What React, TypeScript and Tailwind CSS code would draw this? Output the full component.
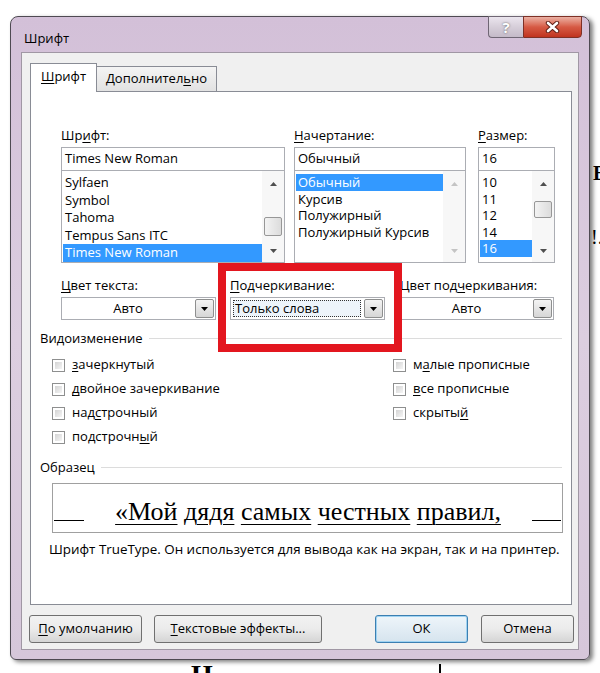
import React from "react";

const ui = "font-['Open_Sans','Noto_Sans',sans-serif]";

// подчёркнутая буква-акселератор
function Acc({ text, i }: { text: string; i: number }) {
  return (
    <>
      {text.slice(0, i)}
      <span className="underline decoration-1 underline-offset-[2px]">{text[i]}</span>
      {text.slice(i + 1)}
    </>
  );
}

function Tri({ up, color = "#000" }: { up?: boolean; color?: string }) {
  return (
    <svg width="7" height="4" viewBox="0 0 7 4" aria-hidden>
      <path d={up ? "M0 4h7L3.5 0z" : "M0 0h7L3.5 4z"} fill={color} />
    </svg>
  );
}

function Scrollbar({ thumb, disabled }: { thumb?: string; disabled?: boolean }) {
  const c = disabled ? "#c4c4c4" : "#4f4f4f";
  return (
    <div className="flex w-[22px] shrink-0 flex-col bg-[#f7f7f7]">
      <div className="flex h-[26px] items-center justify-center">
        <Tri up color={c} />
      </div>
      <div className="flex-1 px-[2px]">
        {thumb && (
          <div
            className={`${thumb} rounded-[2px] border border-[#979797] bg-gradient-to-r from-[#f3f3f3] to-[#dcdcdc]`}
          />
        )}
      </div>
      <div className="flex h-[22px] items-center justify-center">
        <Tri color={c} />
      </div>
    </div>
  );
}

function ListCol({
  w,
  label,
  value,
  items,
  sel,
  leading,
  thumb,
  disabled,
}: {
  w: string;
  label: React.ReactNode;
  value: string;
  items: string[];
  sel: number;
  leading: string;
  thumb?: string;
  disabled?: boolean;
}) {
  return (
    <div className={`flex shrink-0 flex-col ${w}`}>
      <div className="h-[16px] leading-[16px]">{label}</div>
      <div className="mt-[4px] flex h-[24px] items-center border border-[#abadb3] bg-white px-[3px]">
        {value}
      </div>
      <div className="flex h-[92px] border border-t-0 border-[#abadb3] bg-white">
        <div className="flex-1 pl-px pt-[3px]">
          {items.map((it, idx) => (
            <div
              key={it}
              className={`${leading} px-[2px] ${idx === sel ? "bg-[#3399ff] text-white" : ""}`}
            >
              {it}
            </div>
          ))}
        </div>
        <Scrollbar thumb={thumb} disabled={disabled} />
      </div>
    </div>
  );
}

function Combo({ w, value, focus }: { w: string; value: string; focus?: boolean }) {
  return (
    <div className={`flex h-[23px] shrink-0 border border-[#abadb3] bg-white ${w}`}>
      <div className="flex flex-1 p-[2px]">
        {focus ? (
          <div className="flex w-full items-center border border-dotted border-[#333] bg-[#edf4fb] px-[1px]">
            {value}
          </div>
        ) : (
          <div className="flex w-full items-center justify-center">{value}</div>
        )}
      </div>
      <div className="m-px flex w-[19px] items-center justify-center rounded-[2px] border border-[#8e8f8f] bg-gradient-to-b from-[#f4f4f4] to-[#d6d6d6]">
        <Tri />
      </div>
    </div>
  );
}

function Check({ children }: { children: React.ReactNode }) {
  return (
    <div className="flex h-[24px] items-center gap-[7px]">
      <span className="flex h-[13px] w-[13px] border border-[#8e8f8f] bg-white p-[2px]">
        <span className="h-full w-full bg-gradient-to-br from-[#d4d4d4] to-[#f5f5f5]" />
      </span>
      <span>{children}</span>
    </div>
  );
}

function GroupTitle({ children }: { children: React.ReactNode }) {
  return (
    <div className="flex h-[16px] items-center gap-[6px] leading-[16px]">
      <span>{children}</span>
      <span className="h-px flex-1 bg-[#dcdcdc]" />
    </div>
  );
}

function Btn({ w, children, def }: { w: string; children: React.ReactNode; def?: boolean }) {
  return (
    <button
      type="button"
      className={`flex h-[28px] shrink-0 items-center justify-center rounded-[3px] border ${w} ${
        def
          ? "border-[#3c7fb1] bg-gradient-to-b from-[#eef5fa] to-[#d6e4ee] shadow-[inset_0_0_0_1px_#9fd3f2]"
          : "border-[#707070] bg-gradient-to-b from-[#f2f2f2] via-[#ebebeb] to-[#d5d5d5]"
      }`}
    >
      {children}
    </button>
  );
}

const u = "underline decoration-1 underline-offset-[4px]";

export default function App() {
  return (
    <div className={`relative h-[673px] w-[600px] overflow-hidden bg-white text-[13px] text-black ${ui}`}>
      {/* текст документа за окном */}
      <span className="absolute left-[593px] top-[158px] font-['Liberation_Serif',serif] text-[20px] font-bold">В</span>
      <span className="absolute left-[591px] top-[222px] font-['Liberation_Serif',serif] text-[20px]">!.</span>
      <span className="absolute left-[191px] top-[661px] font-['Liberation_Serif',serif] text-[28px] font-bold leading-none">
        Н
      </span>
      <span className="absolute left-[439px] top-[664px] h-[9px] w-[2px] bg-black" />

      <div className="ml-[10px] mt-[16px] flex h-[644px] w-[580px] flex-col rounded-t-[8px] rounded-b-[6px] border border-[#4e4a52] bg-gradient-to-b from-[#d3c0d8] via-[#dccee0] to-[#d6c7da] px-[10px] pb-[9px] shadow-[3px_2px_4px_rgba(0,0,0,0.5)]">
        {/* заголовок */}
        <div className="flex h-[35px] shrink-0 items-start justify-between">
          <span className="mt-[13px] pl-[3px] leading-[16px]">Шрифт</span>
          <div className="-mr-[3px] -mt-px flex">
            <div className="flex h-[22px] w-[35px] items-center justify-center rounded-bl-[4px] border border-r-0 border-[#6f6674] bg-gradient-to-b from-[#ebe5ee] via-[#d6ced9] to-[#c4bac8] text-[15px] font-bold text-white [text-shadow:0_0_2px_#555]">
              ?
            </div>
            <div className="flex h-[22px] w-[59px] items-center justify-center rounded-br-[4px] border border-[#7e3026] bg-gradient-to-b from-[#eab0a4] via-[#d65a44] to-[#c0321e]">
              <svg width="15" height="12" viewBox="0 0 15 12" aria-hidden>
                <path d="M3 2l9 8M12 2l-9 8" stroke="#5d1d14" strokeWidth="4.4" strokeLinecap="round" />
                <path d="M3 2l9 8M12 2l-9 8" stroke="#fff" strokeWidth="2.6" strokeLinecap="round" />
              </svg>
            </div>
          </div>
        </div>

        {/* клиентская область */}
        <div className="flex flex-1 flex-col border border-[#a097a4] bg-[#f0f0f0] pl-[8px] pr-[6px] pt-[10px]">
          {/* вкладки */}
          <div className="relative z-10 flex items-end">
            <div className="-mb-px flex h-[29px] w-[67px] items-center justify-center border border-b-0 border-[#898c95] bg-white pb-[2px]">
              <Acc text="Шрифт" i={0} />
            </div>
            <div className="flex h-[25px] w-[120px] items-center justify-center border border-l-0 border-b-0 border-[#898c95] bg-gradient-to-b from-[#f4f4f4] to-[#e2e2e2]">
              <Acc text="Дополнительно" i={10} />
            </div>
          </div>

          {/* панель вкладки */}
          <div className="flex h-[514px] flex-col border border-[#898c95] bg-white px-[9px] pt-[35px]">
            <div className="flex pl-[21px]">
              <ListCol
                w="w-[224px]"
                label={<Acc text="Шрифт:" i={2} />}
                value="Times New Roman"
                items={["Sylfaen", "Symbol", "Tahoma", "Tempus Sans ITC", "Times New Roman"]}
                sel={4}
                leading="leading-[17.5px]"
                thumb="mt-[20px] h-[19px]"
              />
              <div className="ml-[9px]">
                <ListCol
                  w="w-[172px]"
                  label={<Acc text="Начертание:" i={0} />}
                  value="Обычный"
                  items={["Обычный", "Курсив", "Полужирный", "Полужирный Курсив"]}
                  sel={0}
                  leading="leading-[16.6px]"
                  disabled
                />
              </div>
              <div className="ml-[12px]">
                <ListCol
                  w="w-[77px]"
                  label={<Acc text="Размер:" i={0} />}
                  value="16"
                  items={["10", "11", "12", "14", "16"]}
                  sel={4}
                  leading="leading-[16.6px]"
                  thumb="mt-[4px] h-[17px]"
                />
              </div>
            </div>

            <div className="mt-[14px] flex pl-[21px]">
              <div className="flex w-[155px] flex-col">
                <div className="h-[16px] leading-[16px]">
                  <Acc text="Цвет текста:" i={0} />
                </div>
                <div className="mt-[4px]">
                  <Combo w="w-[155px]" value="Авто" />
                </div>
              </div>
              <div className="ml-[14px] flex w-[155px] flex-col">
                <div className="h-[16px] leading-[16px]">
                  <Acc text="Подчеркивание:" i={0} />
                </div>
                <div className="mt-[4px]">
                  <Combo w="w-[155px]" value="Только слова" focus />
                </div>
              </div>
              <div className="ml-[15px] flex w-[154px] flex-col">
                <div className="h-[16px] leading-[16px]">
                  <Acc text="Цвет подчеркивания:" i={8} />
                </div>
                <div className="mt-[4px]">
                  <Combo w="w-[154px]" value="Авто" />
                </div>
              </div>
            </div>

            <div className="mt-[10px]">
              <GroupTitle>Видоизменение</GroupTitle>
            </div>
            <div className="mt-[7px] flex pl-[12px]">
              <div className="w-[341px]">
                <Check>
                  <Acc text="зачеркнутый" i={0} />
                </Check>
                <Check>
                  <Acc text="двойное зачеркивание" i={0} />
                </Check>
                <Check>
                  <Acc text="надстрочный" i={3} />
                </Check>
                <Check>
                  <Acc text="подстрочный" i={9} />
                </Check>
              </div>
              <div>
                <Check>
                  <Acc text="малые прописные" i={1} />
                </Check>
                <Check>
                  <Acc text="все прописные" i={0} />
                </Check>
                <Check>
                  <Acc text="скрытый" i={6} />
                </Check>
              </div>
            </div>

            <div className="mt-[10px]">
              <GroupTitle>Образец</GroupTitle>
            </div>
            <div className="ml-[12px] mt-[8px] flex h-[50px] w-[511px] items-end justify-between border border-[#a0a0a0] bg-white px-[1px] pb-[11px]">
              <span className="h-px w-[30px] bg-black" />
              <span className="mb-[-6px] font-['Liberation_Serif',serif] text-[26px] leading-[30px]">
                <span className={u}>«Мой</span> <span className={u}>дядя</span>{" "}
                <span className={u}>самых</span> <span className={u}>честных</span>{" "}
                <span className={u}>правил,</span>
              </span>
              <span className="h-px w-[29px] bg-black" />
            </div>
            <div className="ml-[9px] mt-[8px] text-[13.4px] leading-[16px]">
              Шрифт TrueType. Он используется для вывода как на экран, так и на принтер.
            </div>
          </div>

          {/* кнопки */}
          <div className="-ml-px -mr-[2px] mt-[10px] flex">
            <Btn w="w-[113px]">
              <Acc text="По умолчанию" i={0} />
            </Btn>
            <div className="ml-[12px]">
              <Btn w="w-[168px]">
                <Acc text="Текстовые эффекты..." i={0} />
              </Btn>
            </div>
            <div className="ml-auto">
              <Btn w="w-[93px]" def>
                ОК
              </Btn>
            </div>
            <div className="ml-[13px]">
              <Btn w="w-[93px]">Отмена</Btn>
            </div>
          </div>
        </div>
      </div>

      {/* красная рамка выделения */}
      <div className="absolute left-[218px] top-[263px] h-[89px] w-[184px] border-[8px] border-[#e3161f]" />
    </div>
  );
}
